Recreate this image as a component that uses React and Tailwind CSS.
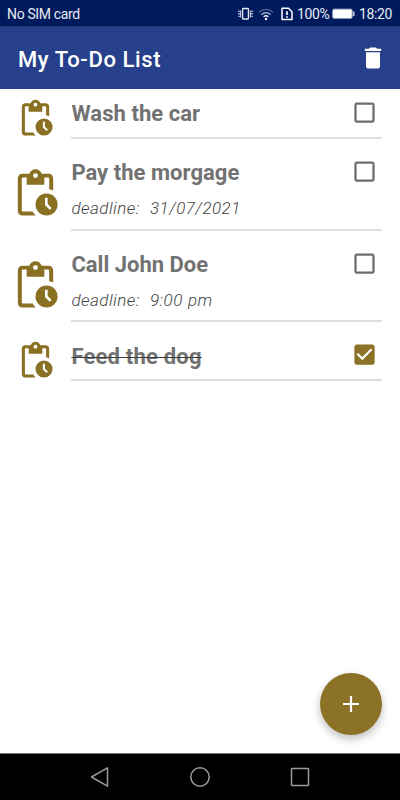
function TaskIcon({ size }) {
  return (
    <svg width={size} height={size} viewBox="0 0 24 24" className="block shrink-0">
      <path
        fill="#8a7023"
        d="M18 3h-3.18C14.4 1.84 13.3 1 12 1s-2.4.84-2.82 2H6c-1.1 0-2 .9-2 2v15c0 1.1.9 2 2 2h6.11c-.59-.57-1.07-1.15-1.42-1.8H6.3c-.3 0-.5-.2-.5-.5V5.3c0-.3.2-.5.5-.5H8V8h8V4.8h1.7c.3 0 .5.2.5.5v4.78c.6.1 1.28.31 1.8.6V5c0-1.1-.9-2-2-2z"
      />
      <circle cx="12" cy="3.9" r="1.1" fill="#fff" />
      <circle cx="17" cy="17" r="5" fill="#8a7023" />
      <path d="M16.9 13.9v3.1l1.95 1.95" fill="none" stroke="#fff" strokeWidth="1.2" />
    </svg>
  );
}

function Checkbox({ checked }) {
  return (
    <svg width="27" height="27" viewBox="0 0 24 24" className="mt-px block shrink-0" fill={checked ? "#8b7226" : "#6d6d6d"}>
      {checked ? (
        <path d="M19 3H5c-1.11 0-2 .9-2 2v14c0 1.1.89 2 2 2h14c1.11 0 2-.9 2-2V5c0-1.1-.89-2-2-2zm-9 14l-5-5 1.41-1.41L10 14.17l7.59-7.59L19 8l-9 9z" />
      ) : (
        <path d="M19 5v14H5V5h14m0-2H5c-1.1 0-2 .9-2 2v14c0 1.1.9 2 2 2h14c1.1 0 2-.9 2-2V5c0-1.1-.9-2-2-2z" />
      )}
    </svg>
  );
}

const tasks = [
  { title: "Wash the car", row: "h-[50px]", icon: "pt-[9px]", body: "pt-[9px]", text: "tracking-[0.05px]" },
  { title: "Pay the morgage", deadline: "31/07/2021", row: "h-[92px]", icon: "pt-[28px]", body: "pt-[18px]", text: "tracking-[0.03px]" },
  { title: "Call John Doe", deadline: "9:00 pm", row: "h-[91px]", icon: "pt-[28px]", body: "pt-[18px]", text: "" },
  { title: "Feed the dog", done: true, row: "h-[59px]", icon: "pt-[18px]", body: "pt-[18px]", text: "pt-px tracking-[0.2px]" },
];

function Task({ task }) {
  return (
    <li className={`flex pr-[18px] ${task.row}`}>
      <div className={`flex w-[71px] shrink-0 justify-center ${task.icon}`}>
        <TaskIcon size={task.deadline ? 53 : 41} />
      </div>
      <div className={`flex grow items-start justify-between border-b-2 border-[#dedede] pr-1 ${task.body}`}>
        <div className="pl-[0.4px] whitespace-pre">
          <div className={`h-8 text-[22px] leading-8 font-bold text-[#727272] ${task.text}`}>
            {task.done ? (
              <span className="line-through decoration-[#3c3c3c] decoration-[1.4px]">{task.title}</span>
            ) : (
              task.title
            )}
          </div>
          {task.deadline && (
            <div className="pt-[9px] text-[17px] leading-5 font-light tracking-[0.45px] text-[#454545] italic [word-spacing:0.6px]">
              {"deadline:  " + task.deadline}
            </div>
          )}
        </div>
        <Checkbox checked={task.done} />
      </div>
    </li>
  );
}

export default function App() {
  return (
    <div className="flex h-[800px] w-[400px] flex-col overflow-hidden bg-white font-['Roboto',sans-serif]">
      <div className="flex h-[26px] shrink-0 items-center bg-[#001a5e] pt-0.5 pr-2 pl-[7px] text-[14px] tracking-[-0.35px] text-[#e8ebf2]">
        <span>No SIM card</span>
        <svg width="15" height="14" viewBox="0 0 15 14" className="ml-auto shrink-0" fill="none" stroke="#e3e6ef" strokeWidth="1.3">
          <rect x="4.6" y="1.5" width="5.8" height="10.5" rx="0.5" />
          <path d="M2.7 3.5v7M12.3 3.5v7" strokeWidth="1" />
          <path d="M1 3.5v7M14 3.5v7" strokeDasharray="1.4 1.2" />
        </svg>
        <svg width="16" height="14" viewBox="0 0 16 14" className="ml-[5px] shrink-0" fill="none" strokeWidth="1.4">
          <path d="M1 5.2a10.2 10.2 0 0 1 14 0" stroke="#52628f" />
          <path d="M3.3 7.7a6.7 6.7 0 0 1 9.4 0" stroke="#9ca6c1" />
          <path d="M5.6 9.8a3.5 3.5 0 0 1 4.8 0" stroke="#e8ebf2" />
          <circle cx="8" cy="12" r="1.2" fill="#fff" />
        </svg>
        <svg width="12" height="14" viewBox="0 0 12 14" className="ml-[7px] shrink-0" fill="none" stroke="#fff" strokeWidth="1.5">
          <path d="M1 1.2h6.5L11 4.7v7.9H1z" strokeLinejoin="round" />
          <path d="M6 4.2v3.8M6 9.2v1.5" strokeWidth="1.7" />
        </svg>
        <span className="ml-1 w-[32px]">100%</span>
        <svg width="24" height="12" viewBox="0 0 24 12" className="ml-[3px] shrink-0">
          <rect x="0.6" y="1.1" width="19.6" height="9.3" rx="1.5" fill="#fff" stroke="#8e99ba" />
          <path d="M21.7 3.5v4.6" stroke="#c5ccdc" strokeWidth="1.6" />
        </svg>
        <span className="ml-[3px]">18:20</span>
      </div>
      <header className="flex h-[63px] shrink-0 items-center justify-between border-t border-[#1c367c] bg-[#27408b] pr-[13px] pl-[18px] text-white">
        <h1 className="pt-0.5 text-[22px] font-medium tracking-[0.6px]">My To-Do List</h1>
        <svg width="28" height="28" viewBox="0 0 24 24" fill="#fff">
          <path d="M6 19c0 1.1.9 2 2 2h8c1.1 0 2-.9 2-2V7H6v12zM19 4h-3.5l-1-1h-5l-1 1H5v2h14V4z" />
        </svg>
      </header>
      <main className="flex grow flex-col justify-between">
        <ul>
          {tasks.map((task) => (
            <Task key={task.title} task={task} />
          ))}
        </ul>
        <button
          aria-label="Add task"
          className="mr-[18px] mb-[18px] flex size-[62px] items-center justify-center self-end rounded-full bg-[#8b7226] shadow-[0_4px_9px_rgba(0,0,0,0.25)]"
        >
          <svg width="16" height="16" viewBox="0 0 16 16" stroke="#fff" strokeWidth="2.2">
            <path d="M8 0v16M0 8h16" />
          </svg>
        </button>
      </main>
      <nav className="flex h-[47px] shrink-0 items-center justify-center gap-[78px] border-t border-[#777] bg-black">
        <svg width="22" height="22" viewBox="0 0 22 22" fill="none" stroke="#9a9a9a" strokeWidth="1.5" strokeLinejoin="round">
          <path d="M2.5 11 18.5 1.8v18.4z" />
        </svg>
        <svg width="22" height="22" viewBox="0 0 22 22" fill="none" stroke="#9a9a9a" strokeWidth="1.5">
          <circle cx="11" cy="11" r="9.2" />
        </svg>
        <svg width="22" height="22" viewBox="0 0 22 22" fill="none" stroke="#9a9a9a" strokeWidth="1.5">
          <rect x="2.5" y="2.5" width="17" height="17" rx="0.5" />
        </svg>
      </nav>
    </div>
  );
}
